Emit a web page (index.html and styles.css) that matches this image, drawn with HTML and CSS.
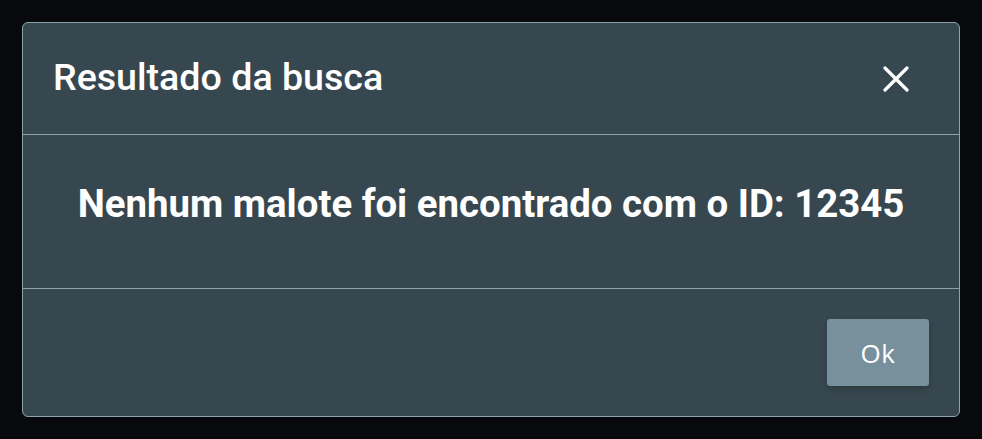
FILE: index.html
```html
<!DOCTYPE html>
<html lang="pt">
<head>
<meta charset="utf-8">
<link rel="stylesheet" href="styles.css">
</head>
<body>
<div class="modal">
  <div class="modal-header">
    <h2 class="modal-title">Resultado da busca</h2>
    <button class="close" aria-label="Fechar">
      <svg width="26" height="26" viewBox="0 0 26 26"><path d="M2 2L24 24M24 2L2 24" stroke="#fff" stroke-width="3.2" stroke-linecap="round"/></svg>
    </button>
  </div>
  <div class="modal-body">
    <p class="message">Nenhum malote foi encontrado com o ID: 12345</p>
  </div>
  <div class="modal-footer">
    <button class="btn-ok">Ok</button>
  </div>
</div>
</body>
</html>
```
FILE: styles.css
```css
html, body { margin: 0; height: 100%; }
body {
  background: #08090d;
  padding: 22px;
  box-sizing: border-box;
  font-family: Roboto, "Liberation Sans", sans-serif;
  color: #fff;
}
.modal {
  height: 395px;
  box-sizing: border-box;
  background: #37474f;
  border: 1px solid #8ea2ad;
  border-radius: 6px;
  display: flex;
  flex-direction: column;
}
.modal-header {
  height: 112px;
  box-sizing: border-box;
  border-bottom: 1px solid #8ea2ad;
  display: flex;
  align-items: center;
  justify-content: space-between;
  padding: 0 50px 4px 30px;
}
.modal-title {
  margin: 0;
  font-size: 37.6px;
  font-weight: 500;
}
.close {
  background: none;
  border: 0;
  padding: 0;
  margin-top: 4px;
  display: flex;
}
.modal-body {
  height: 154px;
  box-sizing: border-box;
  border-bottom: 1px solid #8ea2ad;
  display: flex;
  align-items: center;
  justify-content: center;
  padding-bottom: 16px;
}
.message {
  margin: 0;
  font-size: 38.4px;
  font-weight: 700;
}
.modal-footer {
  flex: 1;
  display: flex;
  justify-content: flex-end;
  align-items: flex-start;
  padding: 30px 30px 0 0;
}
.btn-ok {
  width: 102px;
  height: 67px;
  background: #78909c;
  border: 0;
  border-radius: 3px;
  color: #fff;
  font-family: "Open Sans", sans-serif;
  font-size: 26px;
  letter-spacing: 0.5px;
  box-shadow: 0 3px 6px rgba(0,0,0,0.2);
}
```
